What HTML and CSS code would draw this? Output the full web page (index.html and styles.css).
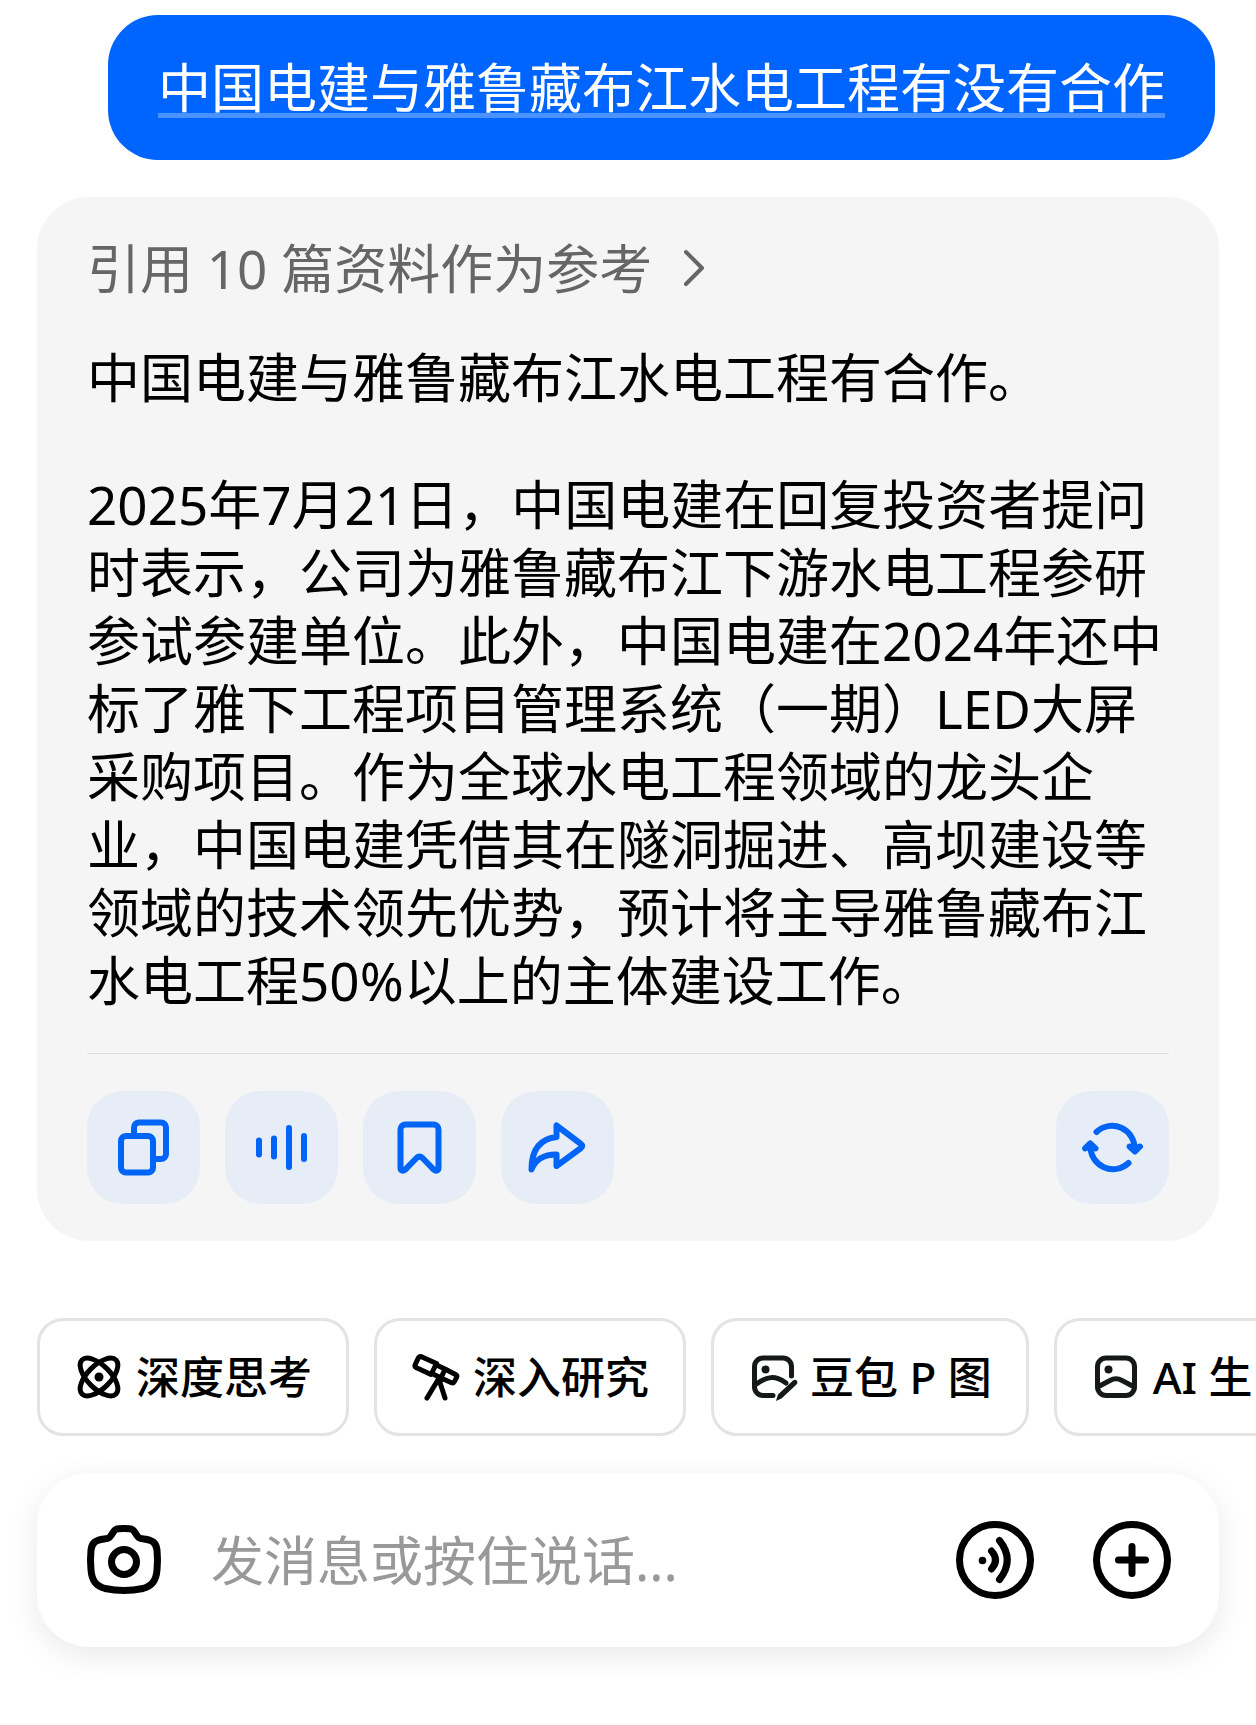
FILE: index.html
```html
<!DOCTYPE html>
<html lang="zh-CN">
<head>
<meta charset="utf-8">
<meta name="viewport" content="width=device-width, initial-scale=1">
<title>对话</title>
<link rel="stylesheet" href="styles.css">
</head>
<body>
<main class="chat">
  <div class="question"><a class="question-link" href="#">中国电建与雅鲁藏布江水电工程有没有合作</a></div>

  <article class="answer">
    <a class="sources" href="#">引用 10 篇资料作为参考
      <svg class="chevron" viewBox="0 0 24 40" aria-hidden="true"><path d="M3 3 19 19 3 35"/></svg>
    </a>
    <p class="lead">中国电建与雅鲁藏布江水电工程有合作。</p>
    <p class="detail">2025年7月21日，中国电建在回复投资者提问时表示，公司为雅鲁藏布江下游水电工程参研参试参建单位。此外，中国电建在2024年还中标了雅下工程项目管理系统（一期）LED大屏采购项目。作为全球水电工程领域的龙头企业，中国电建凭借其在隧洞掘进、高坝建设等领域的技术领先优势，预计将主导雅鲁藏布江水电工程50%以上的主体建设工作。</p>
    <div class="actions">
      <button class="action" type="button" aria-label="复制">
        <svg viewBox="0 0 113 113"><rect x="34" y="45" width="32" height="36.500" rx="5"/><path d="M47 45v-8.500a5 5 0 0 1 5-5h22a5 5 0 0 1 5 5V63a5 5 0 0 1-5 5h-8"/></svg>
      </button>
      <button class="action" type="button" aria-label="朗读">
        <svg class="bars" viewBox="0 0 113 113"><path d="M34 49.500v14M49 47.500v18M64 37v39M79 45v23"/></svg>
      </button>
      <button class="action" type="button" aria-label="收藏">
        <svg viewBox="0 0 113 113"><path d="M42.500 33.500h28a5 5 0 0 1 5 5V77c0 2.500-2.500 3.500-4.500 1.800L59.500 67c-2-1.800-4-1.800-6 0L42 78.800c-2 1.700-4.500.7-4.500-1.800V38.500a5 5 0 0 1 5-5Z"/></svg>
      </button>
      <button class="action" type="button" aria-label="分享">
        <svg viewBox="0 0 113 113"><path d="M55.500 46C38 48 30.500 60 30.500 78.500 34.500 68 43 63.500 55.500 63.500V75L80 57q2.500-2 0-4L55.500 34.500Z"/></svg>
      </button>
      <button class="action action-end" type="button" aria-label="重新生成">
        <svg viewBox="0 0 113 113"><path d="M40.500 41A22.500 22.500 0 0 1 78.500 58M34.500 55A22.500 22.500 0 0 0 72.500 72"/><path class="solid" d="M73.500 55.500 79 60.500 84 55.500 79 57.500ZM29 57.500 34.200 52.500 39.500 57.500 34.200 55.500Z"/></svg>
      </button>
    </div>
  </article>

  <nav class="chips" aria-label="功能">
    <button class="chip" type="button">
      <svg class="chip-icon" viewBox="0 0 48 48"><ellipse cx="25" cy="24" rx="24" ry="11.500" transform="rotate(45 25 24)"/><ellipse cx="25" cy="24" rx="24" ry="11.500" transform="rotate(-45 25 24)"/><circle class="dot" cx="25" cy="24" r="4.500"/></svg>
      深度思考
    </button>
    <button class="chip" type="button">
      <svg class="chip-icon" viewBox="0 0 48 48"><path d="M10.500 3.700 25.500 10.500 20 21.500 5 14.500Q3.500 13.500 4 12L7.500 4.700Q8.700 3 10.500 3.700ZM25.500 12 34 16 30 25 21 20.500M34 16 44.500 21.500Q46.500 22.700 45.500 24.500L43.500 28.500Q42.500 30.500 40.500 29.700L30 25M27.500 26 16 45M27.500 25 34 45"/></svg>
      深入研究
    </button>
    <button class="chip" type="button">
      <svg class="chip-icon soft" viewBox="0 0 48 48"><path d="M43.500 23V13.500a8.500 8.500 0 0 0-8.500-8.500H15a8.500 8.500 0 0 0-8.500 8.500V34a8.500 8.500 0 0 0 8.500 8.500h10"/><path d="M7 32C19 23 27 22 38 30"/><circle class="dot" cx="17.500" cy="16.500" r="4"/><path class="pen" d="M28 48 30 41.500 45 27.500Q47.500 25.800 49 28 50.200 30 48.500 31.500L33.500 45.500Z"/></svg>
      豆包 P 图
    </button>
    <button class="chip" type="button">
      <svg class="chip-icon soft" viewBox="0 0 48 48"><rect x="6.500" y="5" width="37" height="37.500" rx="8.500"/><path d="M7.500 33.500 19 27.500Q25 24 31 27.500L42.500 33.500"/><circle class="dot" cx="17.500" cy="16.500" r="4"/></svg>
      AI 生
    </button>
  </nav>

  <form class="composer">
    <button class="tool" type="button" aria-label="拍照">
      <svg viewBox="0 0 78 78"><path d="M39 7.500C47 7.500 48 8 50 11.500 53 16.500 53.500 17.500 59 18 68 19 71 22 72 29Q73 39 72 49C71 60 67 65 58 67.500Q39 71.500 20 67.500C11 65 7 60 6 49Q5 39 6 29C7 22 10 19 19 18 24.500 17.500 25 16.500 28 11.500 30 8 31 7.500 39 7.500Z"/><circle cx="39" cy="41" r="12.500"/></svg>
    </button>
    <input class="message" type="text" aria-label="消息" placeholder="发消息或按住说话...">
    <button class="tool" type="button" aria-label="语音通话">
      <svg viewBox="0 0 78 78"><circle cx="39" cy="39" r="35.500"/><circle class="dot" cx="26.500" cy="39.500" r="3.800"/><path d="M35.500 30Q43.500 39 35.500 48M43.500 19.500Q59 39 43.500 58.500"/></svg>
    </button>
    <button class="tool tool-last" type="button" aria-label="更多">
      <svg viewBox="0 0 78 78"><circle cx="39" cy="39" r="35.500"/><path d="M25.500 39h27M39 25.500v27"/></svg>
    </button>
  </form>
</main>
</body>
</html>
```

FILE: styles.css
```css
* {
  box-sizing: border-box;
}

body {
  margin: 0;
  background: #fff;
  color: #000;
  font-family: "Noto Sans", "Noto Sans CJK SC", sans-serif;
  font-size: 53px;
  line-height: 68px;
}

button,
input {
  margin: 0;
  padding: 0;
  border: 0;
  background: none;
  color: inherit;
  font: inherit;
}

svg {
  display: block;
  flex: none;
  overflow: visible;
  fill: none;
  stroke: currentColor;
  stroke-linecap: round;
  stroke-linejoin: round;
}

.chat {
  display: flex;
  flex-direction: column;
  padding: 15px 37px 78px;
  overflow: hidden;
}

.question {
  align-self: flex-end;
  margin-right: 4px;
  padding: 39px 50px 38px;
  border-radius: 50px;
  background: #0065ff;
}

.question-link {
  color: #fff;
  text-decoration: underline 5px #4a92ff;
  text-decoration-skip-ink: none;
  text-underline-offset: 5px;
}

.answer {
  margin-top: 37px;
  padding: 38px 50px 37px;
  border-radius: 52px;
  background: #f5f5f5;
}

.sources {
  display: flex;
  align-items: center;
  gap: 31px;
  color: #666;
  text-decoration: none;
}

.chevron {
  width: 24px;
  height: 40px;
  stroke-width: 4;
}

.lead {
  margin: 41px 0 59px;
}

.detail {
  margin: 0;
}

.actions {
  display: flex;
  gap: 25px;
  margin-top: 38px;
  padding-top: 37px;
  border-top: 1px solid #d9d9d9;
}

.action {
  width: 113px;
  height: 113px;
  border-radius: 36px;
  background: #e6edf7;
  color: #0065f7;
  stroke-width: 6;
}

.action-end {
  margin-left: auto;
}

.solid {
  fill: currentColor;
}

.chips {
  display: flex;
  gap: 25px;
  margin-top: 77px;
}

.chip {
  display: flex;
  flex: none;
  align-items: center;
  gap: 14px;
  height: 118px;
  padding: 0 34px;
  border: 3px solid #e3e3e3;
  border-radius: 26px;
  font-size: 44px;
  font-weight: 500;
  white-space: nowrap;
}

.chip-icon {
  width: 48px;
  height: 48px;
  stroke-width: 5;
}

.soft {
  color: #151a18;
}

.dot {
  fill: currentColor;
  stroke: none;
}

.pen {
  fill: currentColor;
  stroke: none;
}

.composer {
  display: flex;
  align-items: center;
  height: 174px;
  margin-top: 37px;
  padding: 0 48px;
  border-radius: 52px;
  background: #fff;
  box-shadow: 0 8px 32px rgba(0, 0, 0, 0.09);
}

.tool {
  flex: none;
  width: 78px;
  height: 78px;
  stroke-width: 7;
}

.tool-last {
  margin-left: 59px;
}

.message {
  flex: 1;
  min-width: 0;
  height: 78px;
  margin: 0 48px;
  outline: 0;
}

.message::placeholder {
  color: #999;
  opacity: 1;
}
```
